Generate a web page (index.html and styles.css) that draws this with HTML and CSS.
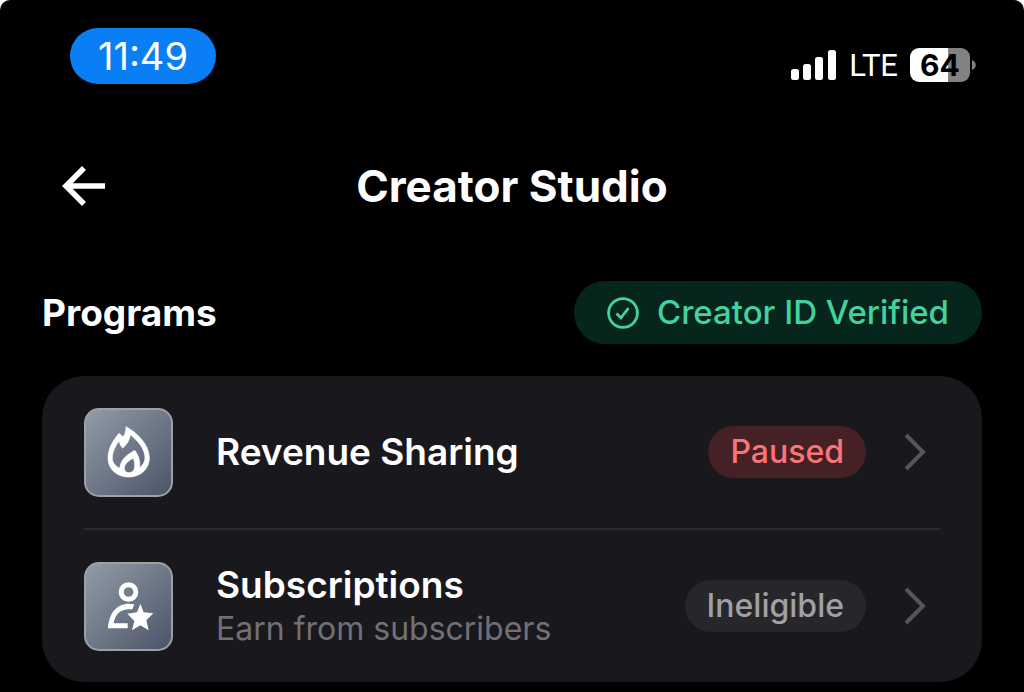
FILE: index.html
```html
<!DOCTYPE html>
<html lang="en">
<head>
<meta charset="utf-8">
<meta name="viewport" content="width=device-width, initial-scale=1">
<title>Creator Studio</title>
<link rel="stylesheet" href="styles.css">
</head>
<body>
<div class="screen">
  <div class="status">
    <time class="clock">11:49</time>
    <div class="indicators">
      <svg class="signal" viewBox="0 0 46 30" fill="#fff" aria-hidden="true">
        <rect x="0" y="19" width="8" height="11" rx="2.5"/>
        <rect x="12" y="14" width="8" height="16" rx="2.5"/>
        <rect x="24" y="7" width="8" height="23" rx="2.5"/>
        <rect x="37" y="0" width="8" height="30" rx="2.5"/>
      </svg>
      <span class="network">LTE</span>
      <div class="battery">
        <span class="level">64</span>
        <svg class="nub" viewBox="0 0 4 10" aria-hidden="true"><path d="M0 0C5 2 5 8 0 10Z" fill="#828282"/></svg>
      </div>
    </div>
  </div>

  <header class="header">
    <button class="back" type="button" aria-label="Back">
      <svg viewBox="0 0 44 40" fill="none" stroke="#fff" stroke-width="5.6" aria-hidden="true">
        <path d="M22 2L4 20L22 38M4 20H43"/>
      </svg>
    </button>
    <h1 class="title">Creator Studio</h1>
  </header>

  <main class="main">
    <div class="section-head">
      <h2 class="section-title">Programs</h2>
      <span class="verified">
        <svg class="check" viewBox="0 0 32 32" fill="none" stroke="currentColor" aria-hidden="true">
          <circle cx="16" cy="16" r="14.4" stroke-width="2.8"/>
          <path d="M9.5 16.5L14 20.8L21.5 11" stroke-width="2.8"/>
        </svg>
        Creator ID Verified
      </span>
    </div>

    <nav class="card" aria-label="Programs">
      <a class="row" href="#revenue">
        <svg class="tile" viewBox="48 42 255 255" fill="#fff" aria-hidden="true">
          <path fill-rule="evenodd" d="M168 92C205 112 238 148 238 186C238 220 210 243 176 243C142 243 114 220 114 186C114 160 128 134 147 112L160 123C165 115 168 104 168 92ZM181 116C205 135 225 160 225 186C225 198 218 208 209 215C211 195 206 178 194 163C180 172 152 186 149 217C133 208 127 198 127 186C127 168 136 150 147 135L152 149L158 156C170 146 179 132 181 116ZM190 186C178 193 163 202 163 217C163 226 170 230 177 230C187 230 194 222 194 212C194 202 193 194 190 186Z" stroke="#fff" stroke-width="2"/>
        </svg>
        <span class="text"><span class="name">Revenue Sharing</span></span>
        <span class="badge paused">Paused</span>
        <svg class="chevron" viewBox="0 0 22 38" fill="none" stroke="#56565a" stroke-width="4" aria-hidden="true"><path d="M2 2L19 19L2 36"/></svg>
      </a>
      <a class="row" href="#subscriptions">
        <svg class="tile" viewBox="48 42 255 255" fill="#fff" aria-hidden="true">
          <circle cx="175.500" cy="126" r="22" fill="none" stroke="#fff" stroke-width="15"/>
          <path d="M193 163C146 154 117 184 114 235H173V220H131C135 191 153 175 187 178Z"/>
          <path d="M211 161L221 187L250 190L229 211L236 241L211 226L186 241L193 213L172 191L201 187Z"/>
        </svg>
        <span class="text"><span class="name">Subscriptions</span><span class="note">Earn from subscribers</span></span>
        <span class="badge ineligible">Ineligible</span>
        <svg class="chevron" viewBox="0 0 22 38" fill="none" stroke="#56565a" stroke-width="4" aria-hidden="true"><path d="M2 2L19 19L2 36"/></svg>
      </a>
    </nav>
  </main>
</div>
</body>
</html>
```
FILE: styles.css
```css
* { box-sizing: border-box; }

body {
  margin: 0;
  background: #fff;
  color: #fff;
  font-family: Inter, "Liberation Sans", sans-serif;
}

.screen {
  min-height: 100vh;
  padding: 28px 42px 10px;
  border-radius: 10px 10px 0 0;
  background: #000;
}

.status {
  display: flex;
  align-items: center;
  justify-content: space-between;
  padding: 0 6px 0 28px;
}

.clock {
  padding: 0 28px;
  border-radius: 28px;
  background: #0a7ff5;
  font-size: 38px;
  line-height: 56px;
}

.indicators {
  display: flex;
  align-items: center;
  gap: 12px;
  padding-top: 18px;
}

.signal { width: 46px; height: 30px; }

.network {
  padding-top: 2px;
  font-family: Roboto, sans-serif;
  font-size: 31px;
  line-height: 34px;
}

.battery { display: flex; align-items: center; gap: 2px; }

.level {
  width: 60px;
  border-radius: 9px;
  background: linear-gradient(90deg, #fff 64%, #828282 64%);
  color: #000;
  font-size: 30px;
  font-weight: 700;
  line-height: 34px;
  text-align: center;
}

.nub { width: 4px; height: 10px; }

.header {
  display: grid;
  grid-template-columns: 64px 1fr 64px;
  align-items: center;
  margin: 66px 0 59px;
}

.back {
  display: flex;
  padding: 0 0 0 20px;
  border: 0;
  background: none;
}

.back svg { width: 44px; height: 40px; }

.title {
  margin: 0;
  font-size: 44px;
  font-weight: 700;
  line-height: 72px;
  text-align: center;
}

.section-head {
  display: flex;
  align-items: center;
  justify-content: space-between;
  margin-bottom: 32px;
}

.section-title {
  margin: 0;
  font-size: 37px;
  font-weight: 700;
}

.verified {
  display: flex;
  align-items: center;
  gap: 18px;
  padding: 0 33px;
  border-radius: 31px;
  background: #06251c;
  color: #43d19e;
  font-size: 33px;
  font-weight: 500;
  line-height: 63px;
}

.check { width: 32px; height: 32px; }

.card {
  padding: 0 42px;
  border-radius: 42px;
  background: #19191d;
}

.row {
  display: flex;
  align-items: center;
  min-height: 152px;
  color: inherit;
  text-decoration: none;
}

.row + .row {
  min-height: 154px;
  border-top: 2px solid #2a2a2d;
}

.tile {
  width: 89px;
  height: 89px;
  border: 2px solid #a09fa5;
  border-radius: 15px;
  background: linear-gradient(135deg, #929ba7, #4b5568);
}

.text {
  display: flex;
  flex: 1;
  flex-direction: column;
  padding-left: 43px;
}

.name {
  font-size: 37px;
  font-weight: 600;
  line-height: 46px;
}

.note {
  color: #707075;
  font-size: 32px;
  line-height: 42px;
}

.badge {
  padding: 0 22px;
  border-radius: 26px;
  font-size: 32px;
  font-weight: 500;
  line-height: 52px;
}

.paused { background: #452125; color: #fb7478; }
.ineligible { background: #27272b; color: #a0a0a5; }

.chevron { width: 22px; height: 38px; margin: 0 14px 0 38px; }
```
